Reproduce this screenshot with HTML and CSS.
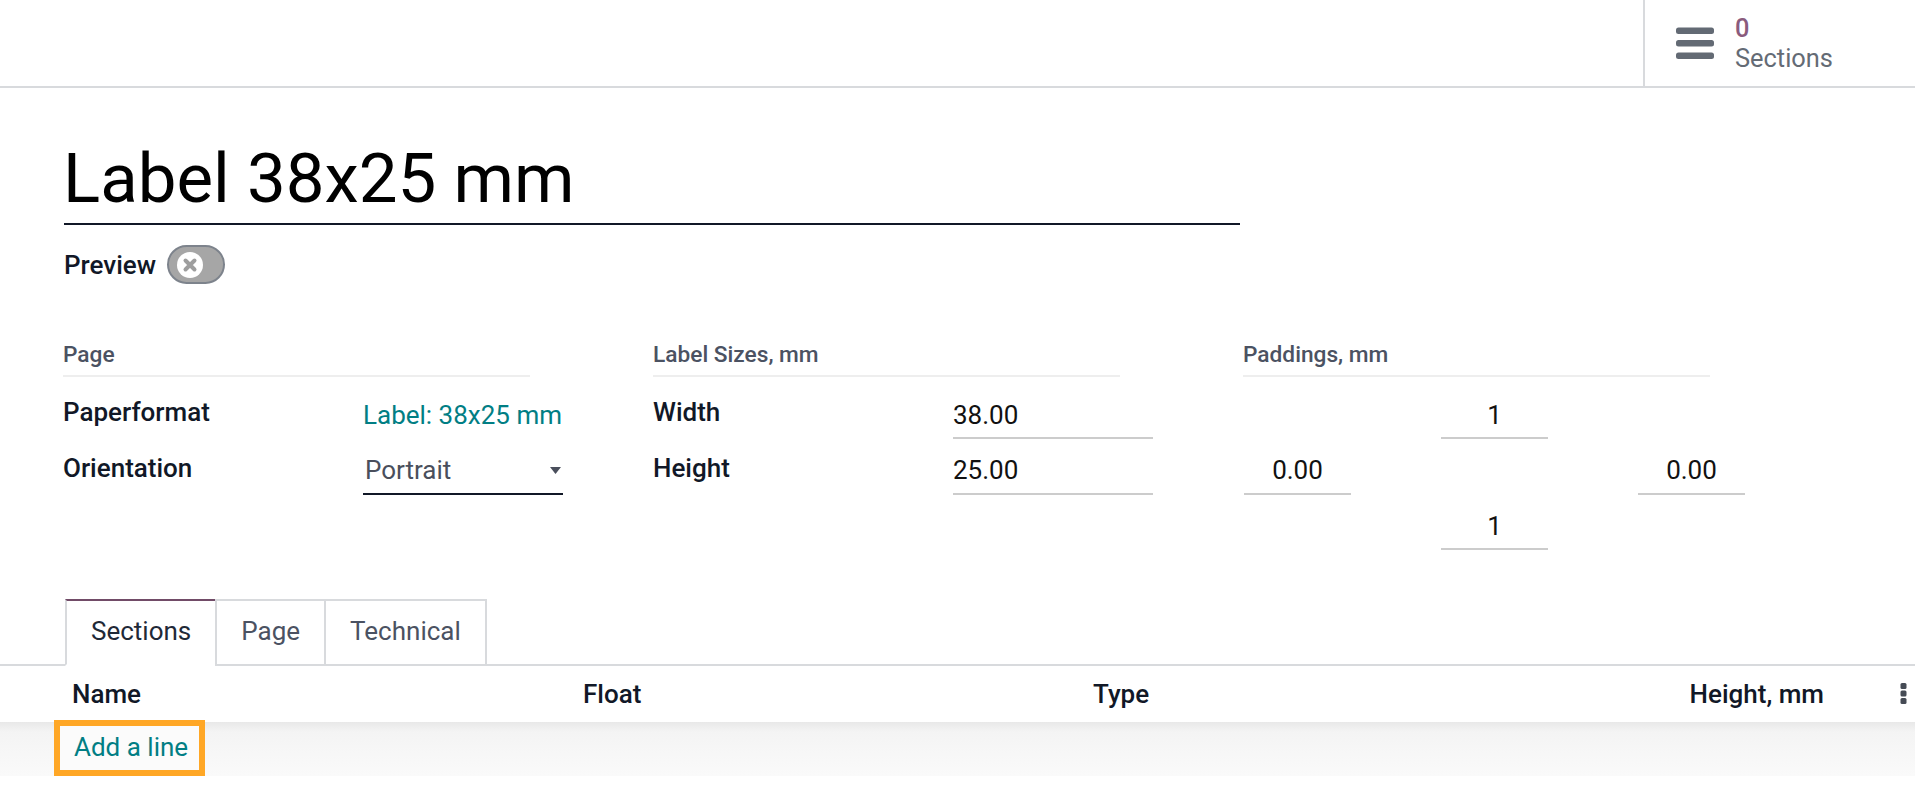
FILE: index.html
```html
<!DOCTYPE html>
<html lang="en">
<head>
<meta charset="utf-8">
<title>Label 38x25 mm</title>
<link rel="stylesheet" href="styles.css">
</head>
<body>
<header class="topbar">
  <div class="stat">
    <svg class="stat-icon" width="38" height="32" viewBox="0 0 38 32">
      <rect x="0" y="0.5" width="38" height="6.5" rx="2.5"/>
      <rect x="0" y="13" width="38" height="6.5" rx="2.5"/>
      <rect x="0" y="25.5" width="38" height="6.5" rx="2.5"/>
    </svg>
    <div class="stat-text">
      <span class="stat-value">0</span>
      <span class="stat-label">Sections</span>
    </div>
  </div>
</header>

<main class="sheet">
  <div class="title">Label 38x25 mm</div>

  <div class="preview-row">
    <span class="preview-label">Preview</span>
    <span class="toggle">
      <span class="knob">
        <svg width="26" height="26" viewBox="0 0 26 26">
          <circle cx="13" cy="13" r="13" fill="#fff"/>
          <path d="M8.5 8.5 L17.5 17.5 M17.5 8.5 L8.5 17.5" stroke="#9e9e9e" stroke-width="4" stroke-linecap="round"/>
        </svg>
      </span>
    </span>
  </div>

  <div class="groups">
    <section class="group">
      <div class="group-title">Page</div>
      <div class="field-row">
        <div class="label">Paperformat</div>
        <div class="value link">Label: 38x25 mm</div>
      </div>
      <div class="field-row">
        <div class="label">Orientation</div>
        <div class="value select">
          <span>Portrait</span>
          <svg class="caret" width="11" height="7" viewBox="0 0 11 7"><polygon points="0,0 11,0 5.5,7"/></svg>
        </div>
      </div>
    </section>

    <section class="group">
      <div class="group-title">Label Sizes, mm</div>
      <div class="field-row">
        <div class="label">Width</div>
        <div class="value input">38.00</div>
      </div>
      <div class="field-row">
        <div class="label">Height</div>
        <div class="value input">25.00</div>
      </div>
    </section>

    <section class="group">
      <div class="group-title">Paddings, mm</div>
      <div class="pad-grid">
        <div class="pad-empty"></div>
        <div class="value input pad">1</div>
        <div class="pad-empty"></div>
        <div class="value input pad">0.00</div>
        <div class="pad-empty"></div>
        <div class="value input pad">0.00</div>
        <div class="pad-empty"></div>
        <div class="value input pad">1</div>
        <div class="pad-empty"></div>
      </div>
    </section>
  </div>
</main>

<nav class="tabs">
  <div class="tab active">Sections</div>
  <div class="tab">Page</div>
  <div class="tab last">Technical</div>
</nav>

<div class="list">
  <div class="list-head">
    <div class="th">Name</div>
    <div class="th">Float</div>
    <div class="th">Type</div>
    <div class="th right">Height, mm</div>
    <div class="th kebab">
      <svg width="7" height="21" viewBox="0 0 7 21">
        <rect x="0.5" y="0" width="6" height="6" rx="1.5"/>
        <rect x="0.5" y="7.5" width="6" height="6" rx="1.5"/>
        <rect x="0.5" y="15" width="6" height="6" rx="1.5"/>
      </svg>
    </div>
  </div>
  <div class="list-row">
    <a class="add-line">Add a line</a>
  </div>
</div>
</body>
</html>
```

FILE: styles.css
```css
html, body {
  margin: 0;
  padding: 0;
  background: #ffffff;
}

body {
  font-family: Roboto, "Liberation Sans", sans-serif;
  font-size: 26px;
  line-height: 38px;
  color: #111827;
  overflow: hidden;
}

/* ---------- top bar ---------- */
.topbar {
  height: 86px;
  border-bottom: 2px solid #d8dadd;
  display: flex;
  justify-content: flex-end;
}

.stat {
  width: 272px;
  box-sizing: border-box;
  border-left: 2px solid #d8dadd;
  padding-left: 31px;
  display: flex;
  align-items: center;
  gap: 21px;
}

.stat-icon {
  fill: #636a74;
  display: block;
}

.stat-text {
  display: flex;
  flex-direction: column;
  line-height: 30.5px;
  font-size: 25.4px;
}

.stat-value {
  color: #8a5b7d;
  font-weight: 500;
}

.stat-label {
  color: #646b75;
}

/* ---------- sheet ---------- */
.sheet {
  padding: 0 64px;
}

.title {
  margin-top: 50px;
  width: 1176px;
  font-size: 69px;
  line-height: 82px;
  padding-bottom: 3px;
  border-bottom: 2px solid #111827;
  text-indent: -1px;
  color: #000;
}

.preview-row {
  margin-top: 20px;
  display: flex;
  align-items: center;
  gap: 11px;
  height: 39px;
}

.preview-label {
  font-weight: 500;
}

.toggle {
  width: 58px;
  height: 39px;
  box-sizing: border-box;
  border: 2px solid #7d838c;
  border-radius: 20px;
  background: #a6a6a6;
  display: flex;
  align-items: center;
  padding-left: 8px;
}

.knob svg {
  display: block;
}

/* ---------- groups ---------- */
.groups {
  margin-top: 54.5px;
  display: grid;
  grid-template-columns: 590px 590px 590px;
  margin-left: -1px;
}

.group-title {
  width: 467px;
  font-size: 22.7px;
  line-height: 32px;
  font-weight: 500;
  color: #4b5262;
  padding-bottom: 4.5px;
  border-bottom: 2px solid #eeeeee;
  margin-bottom: 16px;
}

.field-row {
  display: grid;
  grid-template-columns: 300px 200px;
  height: 55.5px;
  align-items: start;
}

.label {
  font-weight: 500;
  color: #111827;
}

.value {
  padding-top: 2.5px;
  padding-bottom: 3.5px;
  border-bottom: 2px solid transparent;
}

.value.link {
  color: #017e84;
}

.value.input {
  color: #111;
  border-bottom-color: #cccccc;
}

.value.select {
  color: #4a4f5c;
  border-bottom-color: #111827;
  display: flex;
  justify-content: space-between;
  align-items: center;
  padding-left: 2px;
  padding-right: 2px;
}

.caret {
  fill: #4a4f5c;
  display: block;
}

.pad-grid {
  display: grid;
  grid-template-columns: repeat(3, 107px);
  grid-auto-rows: 55.5px;
  column-gap: 90px;
  margin-left: 1px;
}

.pad-grid .value {
  align-self: start;
}

.value.pad {
  text-align: center;
}

/* ---------- tabs ---------- */
.tabs {
  margin-top: 39px;
  padding-left: 65px;
  display: flex;
  align-items: flex-end;
  border-bottom: 2px solid #d8dadd;
}

.tab {
  height: 67px;
  box-sizing: border-box;
  margin-bottom: -2px;
  padding: 0 24px 3px;
  border-top: 2px solid #d8dadd;
  border-left: 2px solid #d8dadd;
  border-bottom: 2px solid transparent;
  display: flex;
  align-items: center;
  color: #4b5262;
}

.tab.last {
  border-right: 2px solid #d8dadd;
}

.tab.active {
  border-top-color: #714b67;
  border-bottom-color: #ffffff;
  color: #1f2937;
  background: #fff;
}

/* ---------- list ---------- */
.list-head {
  height: 56px;
  display: grid;
  grid-template-columns: 511px 510px 1fr auto 91px;
  align-items: center;
  padding-left: 72px;
}

.th {
  font-weight: 500;
  color: #111827;
}

.th.right {
  text-align: right;
}

.th.kebab {
  display: flex;
  justify-content: flex-end;
  padding-right: 8px;
}

.th.kebab svg {
  fill: #454b55;
  display: block;
}

.list-row {
  height: 54px;
  background: linear-gradient(to bottom, #e8e8e8 0, #f4f4f4 10px, #fafafa 100%);
  padding-left: 54px;
}

.add-line {
  display: inline-block;
  margin-top: -2px;
  height: 56px;
  box-sizing: border-box;
  border: 6px solid #ffa726;
  padding: 2px 11px 0 14px;
  color: #017e84;
  background: #fbfbfb;
  line-height: 38px;
}
```
